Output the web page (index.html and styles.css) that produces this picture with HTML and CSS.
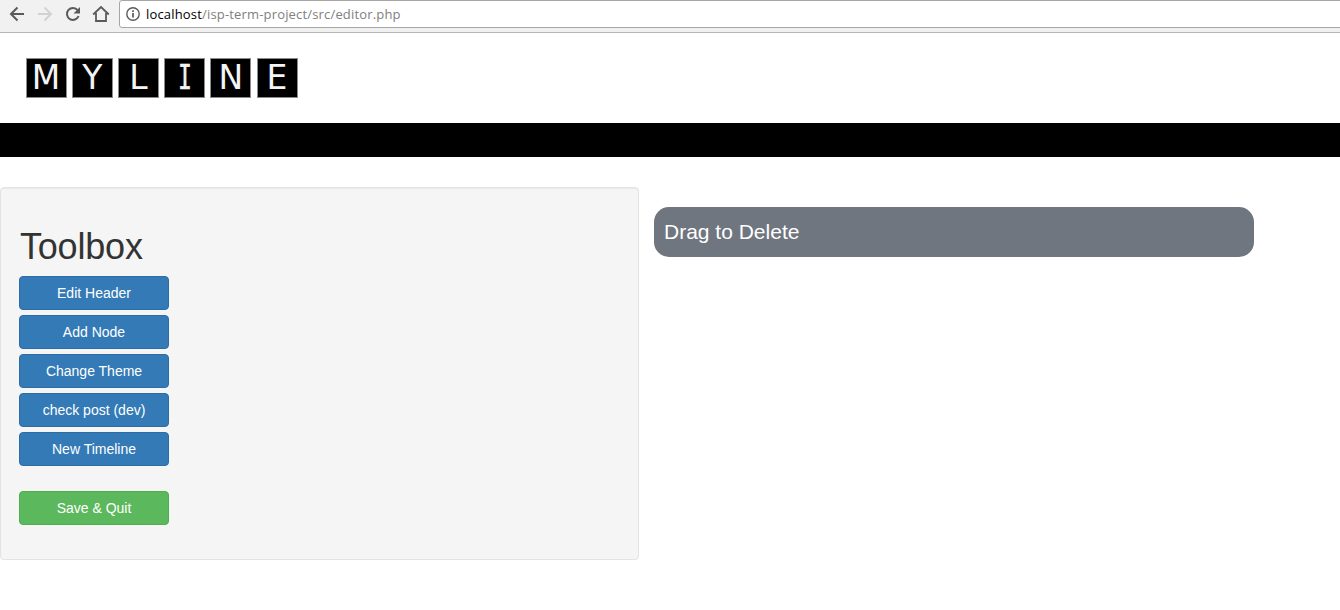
FILE: index.html
```html
<!DOCTYPE html>
<html lang="en">
<head>
<meta charset="utf-8">
<title>MyLine Editor</title>
<link rel="stylesheet" href="styles.css">
</head>
<body>
<div class="browser-bar">
  <svg class="nav-icons" width="119" height="32" viewBox="0 0 119 32" fill="none" stroke="#5a5a5a" stroke-width="2">
    <path d="M24 14H11.5M17.5 7.5L11 14l6.500 6.500"/>
    <path stroke="#d2d2d2" d="M38 14h12.500M44.500 7.500L51 14l-6.500 6.500"/>
    <path d="M77.700 10.200A6 6 0 1 0 78.600 16"/>
    <path fill="#5a5a5a" stroke="none" d="M80 7v6.500h-6.500z"/>
    <path d="M93.200 14.500L101 7l7.800 7.500M96 13v8h10v-8" stroke-width="1.800"/>
  </svg>
  <div class="address">
    <svg class="info" width="14" height="14" viewBox="0 0 14 14" fill="none" stroke="#5a5a5a">
      <circle cx="7" cy="7" r="6.200" stroke-width="1.400"/>
      <path d="M7 6v4.500M7 3.200v1.700" stroke-width="1.700"/>
    </svg>
    <span class="host">localhost</span><span class="path">/isp-term-project/src/editor.php</span>
  </div>
</div>
<header class="logo">
  <span class="tile">M</span><span class="tile">Y</span><span class="tile">L</span><span class="tile"><span class="slab">I</span></span><span class="tile">N</span><span class="tile">E</span>
</header>
<div class="band"></div>
<main class="editor">
  <section class="toolbox">
    <h1>Toolbox</h1>
    <button class="btn">Edit Header</button>
    <button class="btn">Add Node</button>
    <button class="btn">Change Theme</button>
    <button class="btn">check post (dev)</button>
    <button class="btn">New Timeline</button>
    <button class="btn save">Save &amp; Quit</button>
  </section>
  <div class="trash">Drag to Delete</div>
</main>
</body>
</html>
```
FILE: styles.css
```css
* { box-sizing: border-box; }
body {
  margin: 0;
  background: #fff;
  color: #333;
  font-family: "Liberation Sans", Arial, sans-serif;
  overflow: hidden;
}
.browser-bar {
  display: flex;
  height: 33px;
  background: #f1f1f1;
  border-bottom: 1px solid #b5b5b5;
}
.nav-icons { flex: none; }
.address {
  flex: 1;
  display: flex;
  align-items: center;
  height: 28px;
  padding-left: 6px;
  margin-right: -5px;
  background: #fff;
  border: 1px solid #a6a6a6;
  border-radius: 3px;
  font: 13px/26px "Open Sans", sans-serif;
  letter-spacing: .17px;
  white-space: nowrap;
}
.info { flex: none; margin-right: 6px; }
.host { color: #000; }
.path { color: #808080; }
.logo {
  display: flex;
  gap: 5.2px;
  height: 90px;
  padding: 25px 0 0 25.6px;
}
.tile {
  display: flex;
  justify-content: center;
  width: 41px;
  height: 40px;
  background: #000;
  border: 1px solid #8c8c8c;
  color: #f4f4f4;
  font: 33px/37px "DejaVu Sans", sans-serif;
}
.slab {
  font-family: "DejaVu Sans Mono", monospace;
  -webkit-text-stroke: .5px #f4f4f4;
  transform: scaleX(.7);
}
.band { height: 34px; background: #000; }
.editor {
  display: flex;
  align-items: flex-start;
  gap: 15px;
  padding-top: 30px;
}
.toolbox {
  display: flex;
  flex-direction: column;
  align-items: flex-start;
  gap: 5px;
  width: 639px;
  height: 373px;
  padding: 39px 18px 0;
  background: #f5f5f5;
  border: 1px solid #e3e3e3;
  border-radius: 4px;
  box-shadow: inset 0 1px 1px rgba(0, 0, 0, .05);
}
h1 {
  margin: 0 0 4px;
  padding-left: 1px;
  font-size: 36px;
  font-weight: 400;
  line-height: 40px;
  letter-spacing: -.2px;
}
.btn {
  width: 150px;
  height: 34px;
  padding: 0;
  background: #337ab7;
  border: 1px solid #2e6da4;
  border-radius: 4px;
  color: #fff;
  font: 14px/20px "Liberation Sans", Arial, sans-serif;
}
.save { margin-top: 20px; background: #5cb85c; border-color: #4cae4c; }
.trash {
  width: 600px;
  height: 50px;
  margin-top: 20px;
  padding-left: 10px;
  background: #6f7680;
  border-radius: 15px;
  color: #fff;
  font-size: 21px;
  line-height: 50px;
}
```
